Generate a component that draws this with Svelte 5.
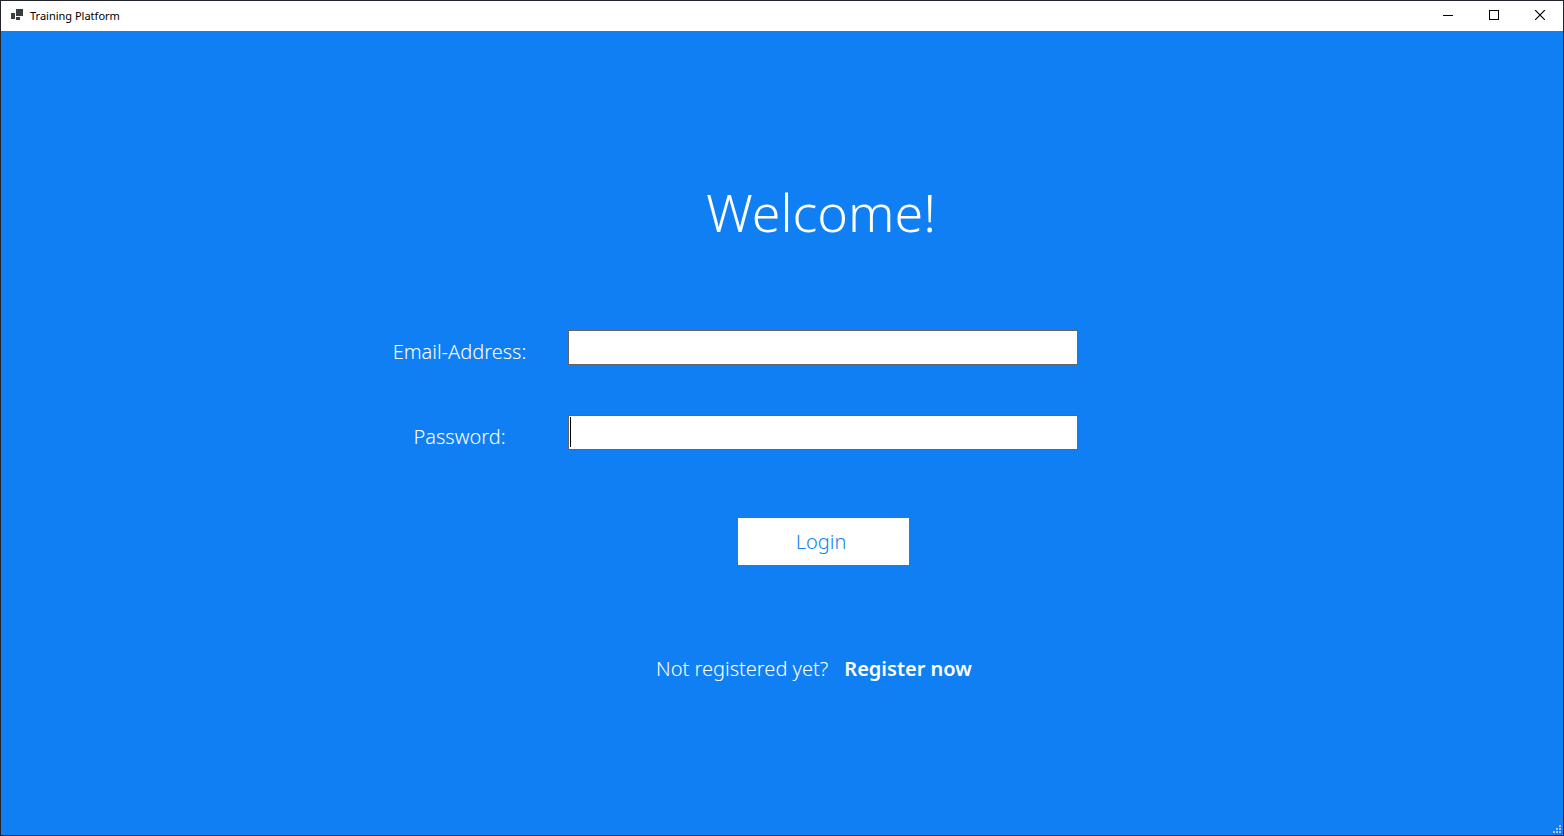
<script>
  let email = $state('');
  let password = $state('');
  let passwordFocused = $state(true);
</script>

<div class="window">
  <header class="titlebar">
    <svg class="app-icon" width="12" height="14" viewBox="0 0 12 14" shape-rendering="crispEdges" aria-hidden="true">
      <path fill="#3c3c3c" d="M5 0h7v7H5zM0 4h4v6H0zM5 8h4v3H5z" />
    </svg>
    <span class="caption">Training Platform</span>
    <div class="controls">
      <button type="button" aria-label="Minimize">
        <svg width="10" height="10" viewBox="0 0 10 10" shape-rendering="crispEdges"><path fill="#000" d="M0 5h10v1H0z" /></svg>
      </button>
      <button type="button" aria-label="Maximize">
        <svg width="10" height="10" viewBox="0 0 10 10" shape-rendering="crispEdges"><path fill="none" stroke="#000" d="M.5 .5h9v9h-9z" /></svg>
      </button>
      <button type="button" aria-label="Close">
        <svg width="10" height="10" viewBox="0 0 10 10"><path fill="none" stroke="#000" stroke-width="1.2" d="M0 0l10 10M10 0L0 10" /></svg>
      </button>
    </div>
  </header>

  <main>
    <form onsubmit={(e) => e.preventDefault()}>
      <h1>Welcome!</h1>

      <label for="email">Email-Address:</label>
      <div class="field">
        <input id="email" type="email" bind:value={email} />
      </div>

      <label for="password">Password:</label>
      <div class="field">
        <input
          id="password"
          type="password"
          bind:value={password}
          onblur={() => (passwordFocused = false)}
        />
        {#if passwordFocused && !password}<span class="caret"></span>{/if}
      </div>

      <button class="login" type="submit">Login</button>

      <p class="signup">
        <span>Not registered yet?</span>
        <a href="#register">Register now</a>
      </p>
    </form>
  </main>

  <svg class="grip" width="8" height="8" viewBox="0 0 8 8" shape-rendering="crispEdges" aria-hidden="true">
    <path fill="#bfbfbf" d="M6 0h2v2H6zM3 3h2v2H3zM6 3h2v2H6zM0 6h2v2H0zM3 6h2v2H3zM6 6h2v2H6z" />
  </svg>
</div>

<style>
  :global(body) {
    margin: 0;
  }

  .window {
    position: relative;
    box-sizing: border-box;
    display: flex;
    flex-direction: column;
    min-height: 100vh;
    border: 1px solid #20242c;
    background: #107ff3;
    color: #fff;
    font-family: "Noto Sans", "Open Sans", sans-serif;
  }

  .titlebar {
    display: flex;
    align-items: center;
    height: 30px;
    padding-left: 10px;
    background: #fff;
    color: #000;
  }

  .app-icon {
    margin-right: 7px;
  }

  .caption {
    font-size: 11px;
    line-height: 16px;
  }

  .controls {
    display: flex;
    margin-left: auto;
  }

  .controls button {
    display: flex;
    align-items: center;
    justify-content: center;
    width: 46px;
    height: 30px;
    padding: 0 0 2px;
    border: 0;
    background: none;
  }

  main {
    flex: 1;
    padding-top: 145px;
    padding-left: max(16px, calc(50% - 406px));
    padding-right: 16px;
  }

  form {
    display: grid;
    grid-template-columns: 167px minmax(0, 510px);
    column-gap: 25px;
    align-items: start;
    font-size: 20px;
    line-height: 28px;
    font-weight: 300;
  }

  h1 {
    grid-column: 2;
    justify-self: center;
    margin: 0 0 82px;
    padding-right: 4px;
    font-size: 52px;
    line-height: 72px;
    font-weight: 300;
  }

  label {
    padding-top: 8px;
    text-align: center;
  }

  .field {
    position: relative;
    margin-bottom: 50px;
  }

  input {
    display: block;
    box-sizing: border-box;
    width: 100%;
    height: 35px;
    padding: 0 4px;
    border: 1px solid #646464;
    border-radius: 0;
    outline: none;
    background: #fff;
    color: #000;
    font: inherit;
  }

  .caret {
    position: absolute;
    top: 2px;
    left: 2px;
    width: 1px;
    height: 30px;
    background: #000;
    pointer-events: none;
  }

  .login {
    grid-column: 2;
    justify-self: center;
    width: 171px;
    height: 47px;
    margin: 18px 0 90px;
    padding: 0 4px 0 0;
    border: 0;
    background: #fff;
    color: #107ff3;
    font: inherit;
  }

  .signup {
    grid-column: 2;
    justify-self: center;
    display: flex;
    gap: 16px;
    margin: 0;
    padding-right: 18px;
    white-space: nowrap;
  }

  .signup a {
    color: #fff;
    font-weight: 600;
    text-decoration: none;
  }

  .grip {
    position: absolute;
    right: 2px;
    bottom: 2px;
  }
</style>
